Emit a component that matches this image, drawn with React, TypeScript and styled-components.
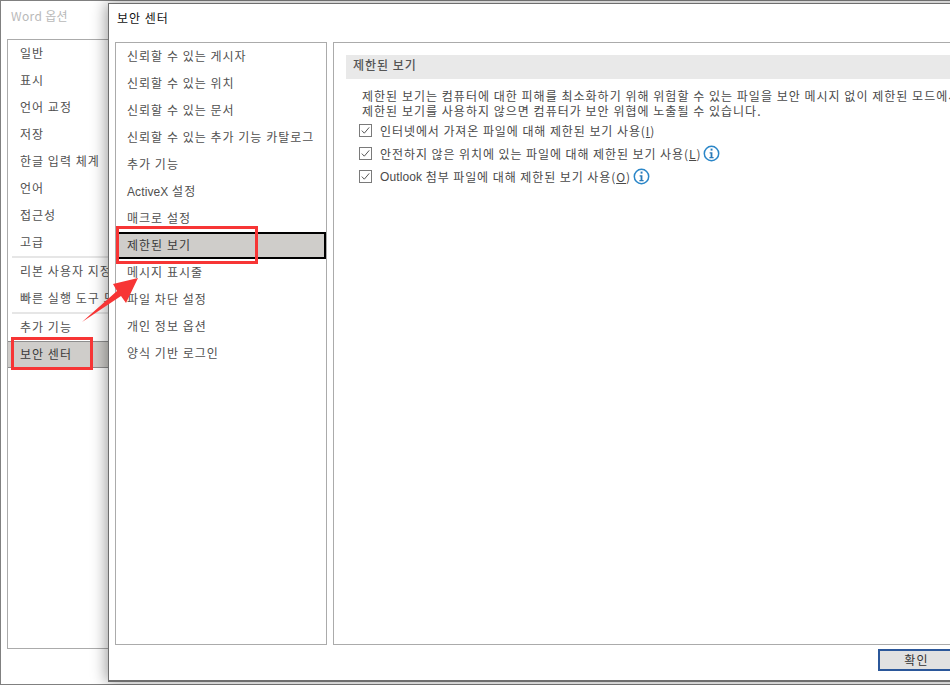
import React from "react";
import styled, { createGlobalStyle } from "styled-components";

const Global = createGlobalStyle`
  html, body { margin: 0; padding: 0; background: #fff; overflow: hidden; }
  body { font-family: "Noto Sans CJK KR", "Liberation Sans", sans-serif; font-size: 12px; color: #444; }
  * { box-sizing: border-box; }
`;

const Desktop = styled.div`
  position: relative;
  width: 950px;
  height: 685px;
  overflow: hidden;
`;

const OuterWindow = styled.div`
  width: 950px;
  height: 685px;
  border: 1px solid #808080;
  border-width: 1px 0 1px 1px;
  padding: 0 0 0 6px;
  display: flex;
  flex-direction: column;
`;

const OuterTitle = styled.div`
  height: 38px;
  padding: 6px 0 0 4px;
  font-size: 12px;
  line-height: 18px;
  letter-spacing: 0.35px;
  color: #b9b9b9;
`;

const Latin = styled.span`
  font-family: "Liberation Sans", sans-serif;
  letter-spacing: 0.1px;
`;

const ListBox = styled.div`
  border: 1px solid #ababab;
  background: #fff;
  display: flex;
  flex-direction: column;
`;

const OuterList = styled(ListBox)`
  width: 300px;
  height: 610px;
`;

const Row = styled.div<{ $selected?: boolean; $strong?: boolean }>`
  height: 27px;
  flex: none;
  line-height: 25px;
  padding-left: 12px;
  white-space: nowrap;
  overflow: hidden;
  font-size: 12px;
  letter-spacing: 1.02px;
  color: #505050;
  ${(p) => p.$selected && `background: #cfcdca; color: #3a3a3a;`}
  ${(p) =>
    p.$selected && p.$strong
      ? `border: 2px solid #000; line-height: 21px;`
      : p.$selected
        ? `border-top: 1px solid #8e8e8e; border-bottom: 1px solid #8e8e8e; line-height: 23px;`
        : ""}
`;

const Separator = styled.div`
  height: 2px;
  flex: none;
  margin: 0 0 0 4px;
  background: #e6e6e6;
`;

const Dialog = styled.div`
  position: absolute;
  left: 108px;
  top: 3px;
  width: 860px;
  height: 679px;
  background: #fff;
  border: 2px solid #6e6e6e;
  border-width: 1px 0 2px 1px;
  box-shadow: -2px 0 14px rgba(0, 0, 0, 0.38);
  display: flex;
  flex-direction: column;
  padding: 0 0 0 6px;
`;

const DialogTitle = styled.div`
  height: 38px;
  padding: 5px 0 0 2px;
  font-size: 12px;
  line-height: 18px;
  letter-spacing: 1px;
  color: #111;
`;

const Panes = styled.div`
  display: flex;
  gap: 6px;
  height: 603px;
`;

const InnerList = styled(ListBox)`
  width: 212px;
  height: 603px;
`;

const InnerRow = styled(Row)`
  padding-left: ${(p) => (p.$strong ? 9 : 11)}px;
`;

const ContentPane = styled.div`
  flex: 1;
  border: 1px solid #ababab;
  border-right: none;
  padding: 12px 0 0 12px;
  overflow: hidden;
`;

const SectionBar = styled.div`
  height: 24px;
  background: #e9e9e9;
  line-height: 20px;
  padding-left: 7px;
  font-size: 12px;
  letter-spacing: 1px;
  font-weight: 500;
  color: #555;
`;

const Paragraph = styled.div`
  margin: 9px 0 0 16px;
  font-size: 12px;
  line-height: 15px;
  letter-spacing: 1.02px;
  white-space: nowrap;
  overflow: hidden;
  color: #4a4a4a;
`;

const Options = styled.div`
  margin: 1px 0 0 13px;
  display: flex;
  flex-direction: column;
`;

const Option = styled.div`
  height: 23px;
  display: flex;
  align-items: center;
  white-space: nowrap;
  letter-spacing: 0.92px;
  color: #4a4a4a;
`;

const Check = styled.svg`
  width: 13px;
  height: 13px;
  margin-right: 8px;
  flex: none;
`;

const InfoIcon = styled.svg`
  width: 17px;
  height: 17px;
  margin-left: 2px;
  flex: none;
`;

const Footer = styled.div`
  flex: 1;
  display: flex;
  align-items: flex-start;
  padding: 4px 0 0 763px;
`;

const OkButton = styled.div`
  width: 100px;
  height: 22px;
  border: 2px solid #2b579a;
  background: #e1e1e1;
  text-align: center;
  font-size: 12px;
  line-height: 18px;
  letter-spacing: 1.2px;
  color: #333;
  padding-right: 13px;
`;

const RedBox = styled.div<{ $x: number; $y: number; $w: number; $h: number }>`
  position: absolute;
  left: ${(p) => p.$x}px;
  top: ${(p) => p.$y}px;
  width: ${(p) => p.$w}px;
  height: ${(p) => p.$h}px;
  border: 3px solid #f73535;
`;

const Arrow = styled.svg`
  position: absolute;
  left: 0;
  top: 0;
  width: 950px;
  height: 685px;
  pointer-events: none;
`;

const Checkmark = () => (
  <Check viewBox="0 0 13 13">
    <rect x="0.5" y="0.5" width="12" height="12" fill="#fff" stroke="#7a7a7a" />
    <path d="M2.8 6.6 L5.3 9.2 L10.2 3.4" fill="none" stroke="#555" strokeWidth="1" />
  </Check>
);

const Info = () => (
  <InfoIcon viewBox="0 0 17 17">
    <circle cx="8.5" cy="8.5" r="7.2" fill="#fff" stroke="#2a86c8" strokeWidth="1.5" />
    <rect x="7.6" y="3.6" width="1.9" height="2" fill="#2a7ab8" />
    <path d="M6.6 7.2 H9.4 V12 H10.6 V13.2 H6.4 V12 H7.6 V8.4 H6.6 Z" fill="#2a7ab8" />
  </InfoIcon>
);

const App: React.FC = () => (
  <Desktop>
    <Global />
    <OuterWindow>
      <OuterTitle>Word 옵션</OuterTitle>
      <OuterList>
        {["일반", "표시", "언어 교정", "저장", "한글 입력 체계", "언어", "접근성", "고급"].map((t) => (
          <Row key={t}>{t}</Row>
        ))}
        <Separator />
        <Row>리본 사용자 지정</Row>
        <Row>빠른 실행 도구 모음</Row>
        <Separator />
        <Row>추가 기능</Row>
        <Row $selected>보안 센터</Row>
      </OuterList>
    </OuterWindow>

    <Dialog>
      <DialogTitle>보안 센터</DialogTitle>
      <Panes>
        <InnerList>
          {["신뢰할 수 있는 게시자", "신뢰할 수 있는 위치", "신뢰할 수 있는 문서", "신뢰할 수 있는 추가 기능 카탈로그", "추가 기능"].map((t) => (
            <InnerRow key={t}>{t}</InnerRow>
          ))}
          <InnerRow><Latin>ActiveX</Latin> 설정</InnerRow>
          <InnerRow>매크로 설정</InnerRow>
          <InnerRow $selected $strong>제한된 보기</InnerRow>
          {["메시지 표시줄", "파일 차단 설정", "개인 정보 옵션", "양식 기반 로그인"].map((t) => (
            <InnerRow key={t}>{t}</InnerRow>
          ))}
        </InnerList>
        <ContentPane>
          <SectionBar>제한된 보기</SectionBar>
          <Paragraph>
            제한된 보기는 컴퓨터에 대한 피해를 최소화하기 위해 위험할 수 있는 파일을 보안 메시지 없이 제한된 모드에서 엽니다.
            <br />
            제한된 보기를 사용하지 않으면 컴퓨터가 보안 위협에 노출될 수 있습니다.
          </Paragraph>
          <Options>
            <Option><Checkmark />인터넷에서 가져온 파일에 대해 제한된 보기 사용(<u>I</u>)</Option>
            <Option><Checkmark />안전하지 않은 위치에 있는 파일에 대해 제한된 보기 사용(<u>L</u>)<Info /></Option>
            <Option><Checkmark /><Latin>Outlook</Latin>&nbsp;첨부 파일에 대해 제한된 보기 사용(<u>O</u>)<Info /></Option>
          </Options>
        </ContentPane>
      </Panes>
      <Footer>
        <OkButton>확인</OkButton>
      </Footer>
    </Dialog>

    <RedBox $x={11} $y={337} $w={82} $h={33} />
    <RedBox $x={116} $y={226} $w={142} $h={38} />
    <Arrow viewBox="0 0 950 685">
      <polygon points="82,322 117,291 113,284 138,278 126,303 121,296" fill="#f73535" />
    </Arrow>
  </Desktop>
);

export default App;
